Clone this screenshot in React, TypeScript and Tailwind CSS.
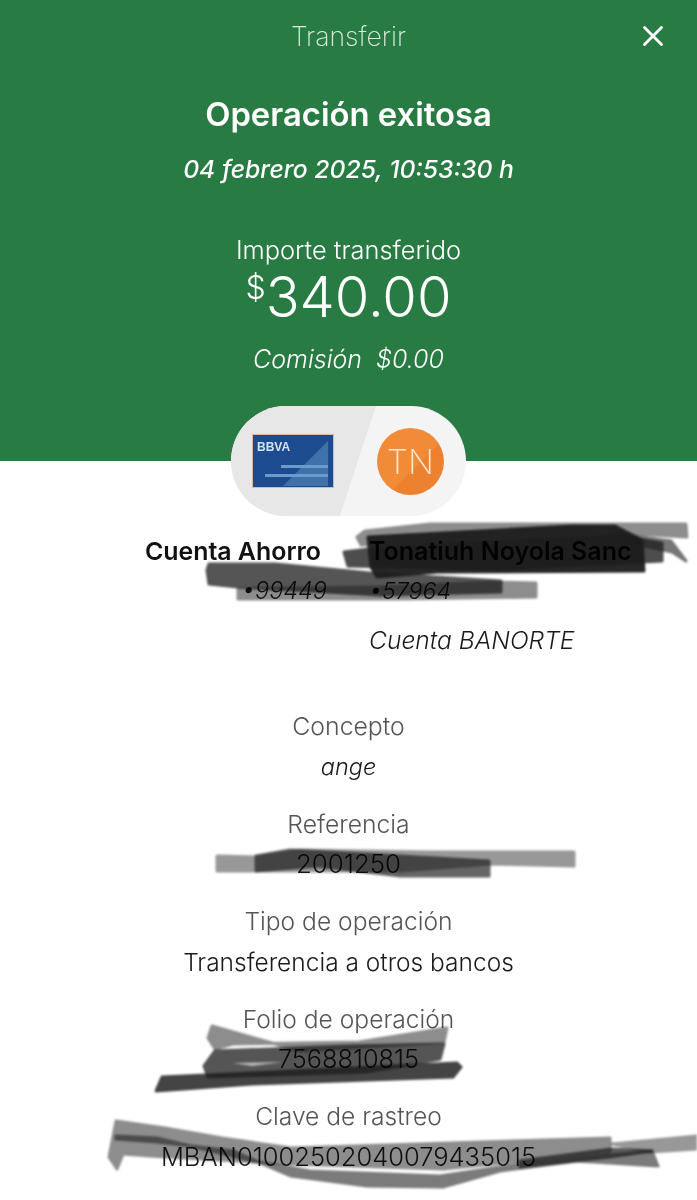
import { X } from "lucide-react";

const DETAILS = [
  { label: "Concepto", value: "ange", labelSize: "text-[24.8px]", valueSize: "text-[23.5px] italic" },
  { label: "Referencia", value: "2001250", labelSize: "text-[24.7px]", valueSize: "text-[25.8px]" },
  { label: "Tipo de operación", value: "Transferencia a otros bancos", labelSize: "text-[24.6px]", valueSize: "text-[24.5px]" },
  { label: "Folio de operación", value: "7568810815", labelSize: "text-[24.6px]", valueSize: "text-[25.3px]" },
  { label: "Clave de rastreo", value: "MBAN01002502040079435015", labelSize: "text-[24.6px]", valueSize: "text-[25.5px]" },
];

// marker scribbles drawn over the private data
const SCRIBBLES = [
  { d: "M357 537L365 531L430 524L686 524L687 537L618 533L560 539L361 545Z", o: 0.5 },
  { d: "M368 537L571 526L615 526L642 540L644 571L437 572L377 577L371 567Z", o: 0.95 },
  { d: "M344 552L369 549L620 536L662 543L662 561L500 569L348 566Z", o: 0.78 },
  { d: "M618 534L671 541L686 561L672 552L640 545Z", o: 0.6 },
  { d: "M207 570L209 564L275 564L370 573L501 581L501 592L380 595L238 587L209 584Z", o: 0.75 },
  { d: "M238 589L380 587L492 582L536 583L536 597L400 599L238 599Z", o: 0.5 },
  { d: "M217 856L257 857L300 850L433 852L574 852L574 866L490 864L400 871L217 871Z", o: 0.45 },
  { d: "M256 856L290 850L400 856L489 861L489 876L400 876L317 866L256 871Z", o: 0.68 },
  { d: "M212 1026L208 1038L215 1049L233 1044L359 1042L447 1028L444 1042L300 1051Z", o: 0.5 },
  { d: "M204 1066L215 1051L347 1046L444 1044L440 1059L367 1072L208 1077Z", o: 0.75 },
  { d: "M156 1091L162 1077L252 1073L457 1063L461 1067L453 1077L252 1084Z", o: 0.82 },
  { d: "M116 1121L165 1128L222 1138L291 1148L610 1138L610 1152L443 1169L291 1164L150 1156L123 1154L117 1169L109 1157Z", o: 0.5 },
  { d: "M116 1136L157 1138L253 1161L310 1171L440 1176L520 1164L652 1151L658 1166L577 1161L500 1171L443 1187L367 1186L291 1176L233 1151L157 1142L116 1139Z", o: 0.58 },
  { d: "M612 1144L697 1136L697 1149L650 1152Z", o: 0.45 },
  { d: "M520 1161L611 1149L652 1151L610 1157L520 1167Z", o: 0.72 },
];

function BankCard() {
  return (
    <svg width="82" height="54" viewBox="0 0 82 54" className="shrink-0">
      <rect x="0.5" y="0.5" width="81" height="53" fill="#1c4c8f" stroke="#e2b798" />
      <path d="M31 52L76 7V52Z" fill="#3f72ab" />
      <rect x="29" y="31" width="47" height="3" fill="#6c9bc9" />
      <rect x="13" y="40" width="63" height="3" fill="#6c9bc9" />
      <text x="5" y="17" fontSize="12" fontWeight="900" fill="#d5e2f0" fontFamily="Liberation Sans, sans-serif">
        BBVA
      </text>
    </svg>
  );
}

export default function App() {
  return (
    <div className="relative h-[1200px] w-[697px] overflow-hidden bg-white font-[family-name:Inter,sans-serif] text-[#1a1a1a]">
      <div className="h-[461px] bg-[#287b42] pt-[19px] text-white">
        <div className="grid grid-cols-[1fr_auto_1fr] items-center px-[27px]">
          <span />
          <h1 className="text-[26.6px] leading-[34px] font-extralight text-[#dbeadf]">Transferir</h1>
          <X className="justify-self-end" size={34} strokeWidth={2} />
        </div>
        <h2 className="mt-[39px] text-center text-[32.8px] leading-[44px] font-semibold">Operación exitosa</h2>
        <p className="mt-[17px] text-center text-[24.7px] leading-[32px] font-medium italic">
          04 febrero 2025, 10:53:30 h
        </p>
        <p className="mt-[49px] text-center text-[25.4px] leading-[32px] font-light">Importe transferido</p>
        <p className="flex justify-center text-[56px] leading-[62px] font-light">
          <span className="text-[32px] leading-[44px]">$</span>
          340.00
        </p>
        <p className="mt-[15px] text-center text-[25px] leading-[32px] font-light italic">
          Comisión&nbsp; $0.00
        </p>
      </div>

      <div className="relative z-10 mx-auto -mt-[55px] flex h-[110px] w-[235px] items-center overflow-hidden rounded-full bg-[#f4f4f4]">
        <div className="absolute inset-y-0 left-0 w-[145px] bg-[#e7e7e7] [clip-path:polygon(0_0,100%_0,75%_100%,0_100%)]" />
        <div className="relative flex w-full items-center pl-[21px]">
          <BankCard />
          <div className="ml-[43px] flex size-[67px] items-center justify-center rounded-full bg-[linear-gradient(135deg,#f28b38_58%,#ec8230_58%)] text-[34px] font-extralight text-[#fbe6d2]">
            TN
          </div>
        </div>
      </div>

      <div className="mt-[18px] grid grid-cols-[321px_1fr] gap-x-[48px]">
        <div className="text-right">
          <p className="text-[24.9px] leading-[34px] font-semibold text-[#111]">Cuenta Ahorro</p>
          <p className="mt-[7px] -mr-[6px] text-[23.5px] leading-[32px] font-light italic">•99449</p>
        </div>
        <div>
          <p className="text-[25px] leading-[34px] font-semibold whitespace-nowrap text-[#111]">Tonatiuh Noyola Sanc</p>
          <p className="mt-[7px] text-[23.2px] leading-[32px] font-light italic">•57964</p>
          <p className="mt-[17px] text-[24.6px] leading-[32px] font-light italic">Cuenta BANORTE</p>
        </div>
      </div>

      <div className="mt-[54px] flex flex-col gap-[25px]">
        {DETAILS.map((item) => (
          <div key={item.label} className="text-center leading-[32px] font-light">
            <p className={`${item.labelSize} leading-[32px] text-[#555]`}>{item.label}</p>
            <p className={`mt-[8.5px] ${item.valueSize} leading-[32px]`}>{item.value}</p>
          </div>
        ))}
      </div>

      <svg
        width="697"
        height="1200"
        viewBox="0 0 697 1200"
        className="pointer-events-none absolute inset-0 z-20 mix-blend-multiply blur-[1px]"
      >
        {SCRIBBLES.map((s, i) => (
          <path key={i} d={s.d} fill="#1c1c1c" stroke="#1c1c1c" strokeWidth="3" strokeLinejoin="round" opacity={s.o} />
        ))}
        <path d="M233 1063L283 1062L252 1066Z" fill="#fff" opacity="0.6" />
      </svg>
    </div>
  );
}
